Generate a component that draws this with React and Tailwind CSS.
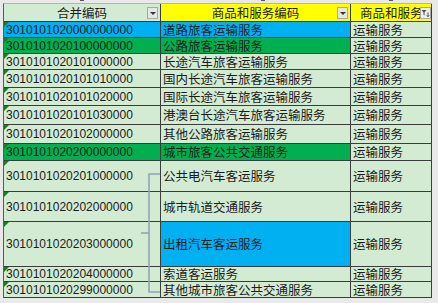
const LG = "bg-[#d3ebd3]";
const BLUE = "bg-[#00b0f0]";
const GREEN = "bg-[#00b050]";

const rows = [
  { code: "3010101020000000000", name: "道路旅客运输服务", h: "h-[16px]", c1: BLUE, c2: BLUE },
  { code: "3010101020100000000", name: "公路旅客运输服务", h: "h-[16px]", c1: GREEN, c2: GREEN },
  { code: "3010101020101000000", name: "长途汽车旅客运输服务", h: "h-[16px]" },
  { code: "3010101020101010000", name: "国内长途汽车旅客运输服务", h: "h-[18px]" },
  { code: "3010101020101020000", name: "国际长途汽车旅客运输服务", h: "h-[18px]" },
  { code: "3010101020101030000", name: "港澳台长途汽车旅客运输服务", h: "h-[19px]" },
  { code: "3010101020102000000", name: "其他公路旅客运输服务", h: "h-[19px]" },
  { code: "3010101020200000000", name: "城市旅客公共交通服务", h: "h-[17px]", c1: GREEN, c2: GREEN },
  { code: "3010101020201000000", name: "公共电汽车客运服务", h: "h-[31px]" },
  { code: "3010101020202000000", name: "城市轨道交通服务", h: "h-[30px]" },
  { code: "3010101020203000000", name: "出租汽车客运服务", h: "h-[45px]", c2: BLUE },
  { code: "3010101020204000000", name: "索道客运服务", h: "h-[15px]" },
  { code: "3010101020299000000", name: "其他城市旅客公共交通服务", h: "h-[16px]" },
];

const cjk = { fontFamily: '"Noto Sans CJK SC", "Noto Sans", sans-serif' };
const latin = { fontFamily: '"Liberation Sans", Arial, sans-serif' };

function DropButton() {
  return (
    <div className="absolute right-[2px] top-[3px] w-[11px] h-[12px] border border-[#a8a8a8] bg-[#e6e6e6] flex items-center justify-center">
      <div className="w-0 h-0 border-l-[3px] border-r-[3px] border-t-[3px] border-l-transparent border-r-transparent border-t-[#333]" />
    </div>
  );
}

function FilterButton() {
  return (
    <div className="absolute right-[0px] top-[3px] w-[11px] h-[12px] border border-[#a8a8a8] bg-[#eeeeee] flex items-center justify-center">
      <svg width="9" height="9" viewBox="0 0 9 9">
        <path d="M0.5 1h5l-2 2.6v3l-1-0.8V3.6z" fill="#555" />
        <path d="M7 3.5v4M5.8 6.3 7 7.7 8.2 6.3" stroke="#444" strokeWidth="0.9" fill="none" />
      </svg>
    </div>
  );
}

export default function App() {
  return (
    <div className="w-[438px] h-[303px] bg-[#e9e9e9] overflow-hidden relative pt-[3px] pl-[3px] text-[#1c1c1c]">
      <div className="absolute top-0 left-[80px] w-[4px] h-[1px] bg-[#555]" />
      <div className="absolute top-0 left-[261px] w-[4px] h-[1px] bg-[#555]" />
      <div className="absolute top-0 left-[389px] w-[4px] h-[1px] bg-[#555]" />

      <div className="w-[429px] border-l border-t border-l-[#5a5a5a] border-t-[#b5b5b5] relative">
        <div className="flex h-[18px] border-b border-[#3c3c3c]">
          <div className={`relative w-[157px] border-r border-[#3c3c3c] ${LG} flex items-center justify-center text-[12.5px] leading-[12px]`} style={cjk}>
            合并编码
            <DropButton />
          </div>
          <div className="relative w-[190px] border-r border-[#3c3c3c] bg-[#ffff00] flex items-center justify-center text-[12.5px] leading-[12px]" style={cjk}>
            商品和服务编码
            <DropButton />
          </div>
          <div className="relative w-[81px] border-r border-[#3c3c3c] bg-[#ffff00] flex items-center pl-[9px] text-[12.5px] leading-[12px] overflow-hidden whitespace-nowrap" style={cjk}>
            商品和服务
            <FilterButton />
          </div>
        </div>

        {rows.map((r) => (
          <div key={r.code} className={`flex ${r.h} border-b border-[#3c3c3c]`}>
            <div className={`relative w-[157px] border-r border-[#3c3c3c] ${r.c1 || LG} flex items-center pl-[2px] text-[12px] leading-[12px] whitespace-nowrap`} style={latin}>
              <div className="absolute top-0 left-0 w-0 h-0 border-t-[5px] border-r-[5px] border-t-[#1f7a2a] border-r-transparent" />
              {r.code}
            </div>
            <div className={`w-[190px] border-r border-[#3c3c3c] ${r.c2 || LG} flex items-center pl-[2px] text-[12.5px] leading-[12px] whitespace-nowrap overflow-hidden`} style={cjk}>
              {r.name}
            </div>
            <div className={`w-[81px] border-r border-[#3c3c3c] ${LG} flex items-center pl-[2px] text-[12.5px] leading-[12px] whitespace-nowrap overflow-hidden`} style={cjk}>
              运输服务
            </div>
          </div>
        ))}

        <svg className="absolute left-[135px] top-[166px]" width="24" height="130" viewBox="0 0 24 130">
          <path d="M21 4H10V122H21M10 63H2" stroke="#8fa3b3" strokeWidth="1.5" fill="none" />
        </svg>
      </div>
    </div>
  );
}
